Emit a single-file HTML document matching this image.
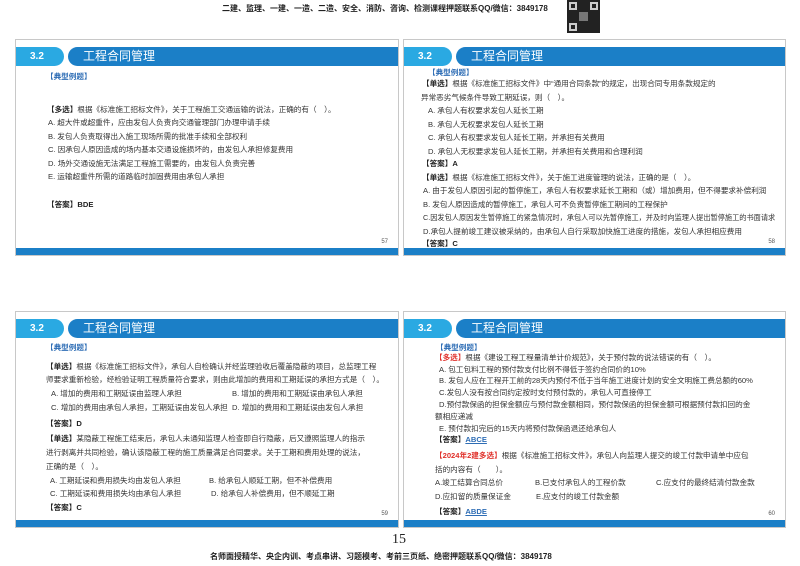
<!DOCTYPE html>
<html><head><meta charset="utf-8">
<style>
*{margin:0;padding:0;box-sizing:border-box}
body{width:800px;height:566px;background:#fff;position:relative;overflow:hidden;font-family:"Liberation Sans","Noto Sans CJK SC",sans-serif;color:#333}
.p{position:absolute;border:1px solid #c8c8c8;background:#fff}
.tab{position:absolute;left:0;width:48px;height:19px;background:#2aa9e2;border-radius:0 10px 10px 0;color:#fff;font-weight:bold;font-size:10px;line-height:19px;padding-left:14px}
.band{position:absolute;left:52px;right:0;height:19px;background:#1b7fc7;border-radius:10px 0 0 10px;color:#fff;font-size:12px;line-height:19px;padding-left:15px}
.bot{position:absolute;left:0;right:0;bottom:0;height:7px;background:#1b7fc7}
.num{position:absolute;font-size:6px;color:#555}
.l{position:absolute;font-size:7.6px;line-height:10px;white-space:nowrap;color:#333}
.b{font-weight:bold;color:#222}
.blue{color:#2e6db5;font-weight:bold}
.red{color:#e0302a;font-weight:bold}
.ul{color:#2e6db5;text-decoration:underline;font-weight:bold}
.top{position:absolute;top:3px;left:222px;font-size:8px;font-weight:bold;color:#222;white-space:nowrap}
</style></head><body>
<div class="top">二建、监理、一建、一造、二造、安全、消防、咨询、检测课程押题联系QQ/微信：3849178</div>
<div style="position:absolute;left:567px;top:0;width:33px;height:33px;background:#222;">
<div style="position:absolute;left:2px;top:2px;width:8px;height:8px;border:2px solid #ccc"></div>
<div style="position:absolute;right:2px;top:2px;width:8px;height:8px;border:2px solid #ccc"></div>
<div style="position:absolute;left:2px;bottom:2px;width:8px;height:8px;border:2px solid #ccc"></div>
<div style="position:absolute;left:12px;top:12px;width:9px;height:9px;background:#777"></div>
</div>

<!-- panel 1 -->
<div class="p" style="left:15px;top:39px;width:384px;height:217px">
<div class="tab" style="top:7px">3.2</div><div class="band" style="top:7px">工程合同管理</div>
<div class="bot"></div><div class="num" style="right:10px;bottom:10px">57</div>
</div>
<div class="l blue" style="left:46px;top:72px">【典型例题】</div>
<div class="l" style="left:47px;top:105px"><span class="b">【多选】</span>根据《标准施工招标文件》，关于工程施工交通运输的说法，正确的有（　）。</div>
<div class="l" style="left:48px;top:118px">A. 超大件或超重件，应由发包人负责向交通管理部门办理申请手续</div>
<div class="l" style="left:48px;top:132px">B. 发包人负责取得出入施工现场所需的批准手续和全部权利</div>
<div class="l" style="left:48px;top:145px">C. 因承包人原因造成的场内基本交通设施损坏的，由发包人承担修复费用</div>
<div class="l" style="left:48px;top:159px">D. 场外交通设施无法满足工程施工需要的，由发包人负责完善</div>
<div class="l" style="left:48px;top:172px">E. 运输超重件所需的道路临时加固费用由承包人承担</div>
<div class="l b" style="left:47px;top:200px">【答案】BDE</div>

<!-- panel 2 -->
<div class="p" style="left:403px;top:39px;width:383px;height:217px">
<div class="tab" style="top:7px">3.2</div><div class="band" style="top:7px">工程合同管理</div>
<div class="bot"></div><div class="num" style="right:10px;bottom:10px">58</div>
</div>
<div class="l blue" style="left:428px;top:68px">【典型例题】</div>
<div class="l" style="left:422px;top:79px"><span class="b">【单选】</span>根据《标准施工招标文件》中“通用合同条款”的规定，出现合同专用条款规定的</div>
<div class="l" style="left:421px;top:93px">异常恶劣气候条件导致工期延误，则（　）。</div>
<div class="l" style="left:428px;top:106px">A. 承包人有权要求发包人延长工期</div>
<div class="l" style="left:428px;top:120px">B. 承包人无权要求发包人延长工期</div>
<div class="l" style="left:428px;top:133px">C. 承包人有权要求发包人延长工期，并承担有关费用</div>
<div class="l" style="left:428px;top:147px">D. 承包人无权要求发包人延长工期，并承担有关费用和合理利润</div>
<div class="l b" style="left:422px;top:159px">【答案】A</div>
<div class="l" style="left:422px;top:173px"><span class="b">【单选】</span>根据《标准施工招标文件》，关于施工进度管理的说法，正确的是（　）。</div>
<div class="l" style="left:423px;top:186px">A. 由于发包人原因引起的暂停施工，承包人有权要求延长工期和（或）增加费用，但不得要求补偿利润</div>
<div class="l" style="left:423px;top:200px">B. 发包人原因造成的暂停施工，承包人可不负责暂停施工期间的工程保护</div>
<div class="l" style="left:423px;top:213px;font-size:7.2px">C.因发包人原因发生暂停施工的紧急情况时，承包人可以先暂停施工，并及时向监理人提出暂停施工的书面请求</div>
<div class="l" style="left:423px;top:227px">D.承包人提前竣工建议被采纳的，由承包人自行采取加快施工进度的措施，发包人承担相应费用</div>
<div class="l b" style="left:422px;top:239px">【答案】C</div>

<!-- panel 3 -->
<div class="p" style="left:15px;top:311px;width:384px;height:217px">
<div class="tab" style="top:7px">3.2</div><div class="band" style="top:7px">工程合同管理</div>
<div class="bot"></div><div class="num" style="right:10px;bottom:10px">59</div>
</div>
<div class="l blue" style="left:46px;top:343px">【典型例题】</div>
<div class="l" style="left:46px;top:362px"><span class="b">【单选】</span>根据《标准施工招标文件》，承包人自检确认并经监理验收后覆盖隐蔽的项目，总监理工程</div>
<div class="l" style="left:46px;top:375px">师要求重新检验，经检验证明工程质量符合要求，则由此增加的费用和工期延误的承担方式是（　）。</div>
<div class="l" style="left:51px;top:389px">A. 增加的费用和工期延误由监理人承担</div>
<div class="l" style="left:232px;top:389px">B. 增加的费用和工期延误由承包人承担</div>
<div class="l" style="left:51px;top:403px">C. 增加的费用由承包人承担，工期延误由发包人承担</div>
<div class="l" style="left:232px;top:403px">D. 增加的费用和工期延误由发包人承担</div>
<div class="l b" style="left:46px;top:419px">【答案】D</div>
<div class="l" style="left:46px;top:434px"><span class="b">【单选】</span>某隐蔽工程施工结束后，承包人未通知监理人检查即自行隐蔽，后又遵照监理人的指示</div>
<div class="l" style="left:46px;top:448px">进行剥离并共同检验，确认该隐蔽工程的施工质量满足合同要求。关于工期和费用处理的说法，</div>
<div class="l" style="left:46px;top:462px">正确的是（　）。</div>
<div class="l" style="left:50px;top:476px">A. 工期延误和费用损失均由发包人承担</div>
<div class="l" style="left:209px;top:476px">B. 给承包人顺延工期，但不补偿费用</div>
<div class="l" style="left:50px;top:489px">C. 工期延误和费用损失均由承包人承担</div>
<div class="l" style="left:211px;top:489px">D. 给承包人补偿费用，但不顺延工期</div>
<div class="l b" style="left:46px;top:503px">【答案】C</div>

<!-- panel 4 -->
<div class="p" style="left:403px;top:311px;width:383px;height:217px">
<div class="tab" style="top:7px">3.2</div><div class="band" style="top:7px">工程合同管理</div>
<div class="bot"></div><div class="num" style="right:10px;bottom:10px">60</div>
</div>
<div class="l blue" style="left:436px;top:343px">【典型例题】</div>
<div class="l" style="left:435px;top:353px"><span class="red">【多选】</span>根据《建设工程工程量清单计价规范》，关于预付款的说法错误的有（　）。</div>
<div class="l" style="left:439px;top:365px">A. 包工包料工程的预付款支付比例不得低于签约合同价的10%</div>
<div class="l" style="left:439px;top:376px">B. 发包人应在工程开工前的28天内预付不低于当年施工进度计划的安全文明施工费总额的60%</div>
<div class="l" style="left:439px;top:388px">C.发包人没有按合同约定按时支付预付款的，承包人可直接停工</div>
<div class="l" style="left:439px;top:400px">D.预付款保函的担保金额应与预付款金额相同，预付款保函的担保金额可根据预付款扣回的金</div>
<div class="l" style="left:435px;top:412px">额相应递减</div>
<div class="l" style="left:439px;top:424px">E. 预付款扣完后的15天内将预付款保函退还给承包人</div>
<div class="l b" style="left:435px;top:435px">【答案】<span class="ul">ABCE</span></div>
<div class="l" style="left:435px;top:451px"><span class="red">【2024年2建多选】</span>根据《标准施工招标文件》，承包人向监理人提交的竣工付款申请单中应包</div>
<div class="l" style="left:435px;top:465px">括的内容有（　　）。</div>
<div class="l" style="left:435px;top:478px">A.竣工结算合同总价</div>
<div class="l" style="left:535px;top:478px">B.已支付承包人的工程价款</div>
<div class="l" style="left:656px;top:478px">C.应支付的最终结清付款金款</div>
<div class="l" style="left:435px;top:492px">D.应扣留的质量保证金</div>
<div class="l" style="left:536px;top:492px">E.应支付的竣工付款金额</div>
<div class="l b" style="left:435px;top:507px">【答案】<span class="ul">ABDE</span></div>

<div style="position:absolute;left:392px;top:532px;font-family:'Liberation Serif',serif;font-size:14px;color:#222">15</div>
<div style="position:absolute;left:210px;top:551px;font-size:8px;font-weight:bold;color:#222;white-space:nowrap">名师面授精华、央企内训、考点串讲、习题模考、考前三页纸、绝密押题联系QQ/微信：3849178</div>
</body></html>
